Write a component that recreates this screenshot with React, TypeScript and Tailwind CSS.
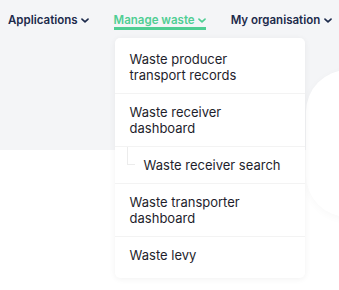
import { useState } from "react";

type MenuItem = { label: string; child?: boolean };

//items of the open "Manage waste" menu
const wasteItems: MenuItem[] = [
  { label: "Waste producer transport records" },
  { label: "Waste receiver dashboard" },
  { label: "Waste receiver search", child: true },
  { label: "Waste transporter dashboard" },
  { label: "Waste levy" },
];

function Chevron({ className }: { className?: string }) {
  return (
    <svg viewBox="0 0 10 6" className={className} fill="none">
      <path d="M1.2 1.2 5 4.8l3.8-3.6" stroke="currentColor" strokeWidth="2" strokeLinecap="round" strokeLinejoin="round" />
    </svg>
  );
}

export default function App() {
  const [open] = useState("waste");

  return (
    <main className="min-h-[290px] w-[339px] overflow-hidden bg-white font-['Inter','Liberation_Sans',sans-serif]">
      {/* Grey header band with the nav */}
      <div className="h-[150px] bg-[#f4f5f7]">
        <nav className="relative flex items-start gap-[25px] pl-[8px] pt-[13px] text-[11.5px] font-semibold leading-[14px] text-[#1c2a4b]">
          <button className="flex items-center gap-[3px] whitespace-nowrap">
            Applications
            <Chevron className="h-[5px] w-[8px]" />
          </button>

          <div className="relative">
            <button className="flex items-center gap-[3px] whitespace-nowrap border-b-[3px] border-[#4fce93] text-[#4fce93]">
              Manage waste
              <Chevron className="h-[5px] w-[8px]" />
            </button>

            {/* Dropdown */}
            {open === "waste" && (
              <ul className="absolute left-px top-[25px] z-10 w-[190px] rounded-[5px] bg-white pb-[5px] pt-[3px] text-[13px] font-normal leading-[16px] text-[#1e1e2c] shadow-[0_1px_6px_rgba(0,0,0,0.06)]">
                {wasteItems.map((item, i) => (
                  <li
                    key={item.label}
                    className={
                      "relative py-[10px] pr-[20px] " +
                      (i > 0 ? "border-t border-[#f3f3f3] " : "") +
                      (item.child ? "pl-[29px]" : "pl-[15px]")
                    }
                  >
                    {item.child && (
                      <span className="absolute left-[12px] top-0 h-[18px] w-[8px] border-b border-l border-[#ececec]" />
                    )}
                    {item.label}
                  </li>
                ))}
              </ul>
            )}
          </div>

          <button className="flex items-center gap-[4px] whitespace-nowrap">
            My organisation
            <Chevron className="h-[5px] w-[8px]" />
          </button>
        </nav>

        {/* Card peeking in on the right */}
        <div className="ml-[306px] mt-[40px] h-[147px] w-[120px] rounded-[42px] bg-white shadow-[0_2px_8px_rgba(0,0,0,0.03)]" />
      </div>
    </main>
  );
}
